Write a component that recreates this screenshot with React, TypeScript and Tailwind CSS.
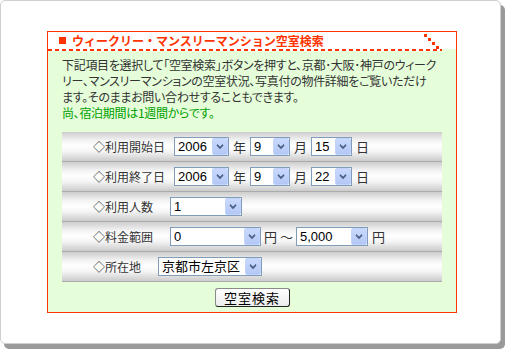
import React from "react";

const jp = "font-['Noto_Sans_CJK_JP','Noto_Sans',sans-serif]";

function Chevron() {
  return (
    <svg width="8" height="6" viewBox="0 0 8 6">
      <path d="M1 1 L4 4 L7 1" fill="none" stroke="#4d6185" strokeWidth="1.6" />
      <path d="M1 0 L4 3 L7 0" fill="none" stroke="#4d6185" strokeWidth="1" opacity="0.6" />
    </svg>
  );
}

function Select({ value, w }: { value: string; w: string }) {
  return (
    <div
      className={`${w} h-[19px] border border-[#7f9db9] bg-white flex items-stretch`}
    >
      <span className="flex-1 pl-[3px] text-[13px] leading-[17px] text-black font-['Liberation_Sans','Noto_Sans_CJK_JP',sans-serif] whitespace-nowrap overflow-hidden">
        {value}
      </span>
      <span className="w-[16px] flex items-center justify-center bg-gradient-to-b from-[#c9d9fc] to-[#b2c8f5] border border-[#c3d3fd] rounded-[2px]">
        <Chevron />
      </span>
    </div>
  );
}

function Unit({ t, cls = "mx-[4px]" }: { t: string; cls?: string }) {
  return <span className={`${cls} text-[13px] leading-[17px] text-[#333]`}>{t}</span>;
}

function Row({
  label,
  lw,
  children,
}: {
  label: string;
  lw: string;
  children: React.ReactNode;
}) {
  return (
    <div className="h-[30px] border-b border-[#ababab] bg-[linear-gradient(to_bottom,#cdcdcd_0%,#f2f2f2_28%,#ffffff_48%,#f4f4f4_68%,#cbcbcb_100%)] flex items-center">
      <span className={`${lw} pl-[31px] text-[12px] text-[#333] whitespace-nowrap`}>{label}</span>
      <div className="flex items-center">{children}</div>
    </div>
  );
}

export default function App() {
  return (
    <div className={`w-[505px] h-[349px] bg-white ${jp}`}>
      <div className="w-[501px] h-[344px] bg-white border border-[#cfcfcf] rounded-[5px] shadow-[4px_5px_0_#9a9a9a] pt-[30px] pl-[46px]">
        <div className="w-[410px] h-[282px] border border-[#ff3300] bg-[#e5fdd9] flex flex-col">
          {/* title */}
          <div className="relative h-[17px] bg-white flex items-center pl-[11px]">
            <span className="w-[7px] h-[7px] bg-[#ff3300] mr-[6px]" />
            <span className="text-[12px] font-bold text-[#ff3300] leading-[17px] whitespace-nowrap">
              ウィークリー・マンスリーマンション空室検索
            </span>
            <svg className="absolute left-[376px] top-[2px]" width="16" height="16" viewBox="0 0 16 16">
              <rect x="0" y="0" width="3" height="3" fill="#ff3300" />
              <rect x="4" y="4" width="3" height="3" fill="#ff3300" />
              <rect x="8" y="8" width="3" height="3" fill="#ff3300" />
              <rect x="12" y="12" width="3" height="3" fill="#ff3300" />
            </svg>
          </div>
          <div className="h-[2px] w-[394px] bg-[repeating-linear-gradient(to_right,#ff3300_0px,#ff3300_4px,#ffffff_4px,#ffffff_7px)]" />
          {/* body */}
          <div className="pl-[14px] pt-[6px]">
            <p className="text-[12px] leading-[16px] text-[#333] tracking-[-0.3px] [font-feature-settings:'palt'] whitespace-nowrap">
              下記項目を選択して「空室検索」ボタンを押すと、京都･大阪･神戸のウィーク
              <br />
              リー、マンスリーマンションの空室状況、写真付の物件詳細をご覧いただけ
              <br />
              ます。そのままお問い合わせすることもできます。
              <br />
              <span className="text-[#00a000]">尚、宿泊期間は1週間からです。</span>
            </p>
            <div className="mt-[11px] w-[380px] flex flex-col">
              <Row label="◇利用開始日" lw="w-[112px]">
                <Select value="2006" w="w-[55px]" />
                <Unit t="年" />
                <Select value="9" w="w-[40px]" />
                <Unit t="月" />
                <Select value="15" w="w-[41px]" />
                <Unit t="日" />
              </Row>
              <Row label="◇利用終了日" lw="w-[112px]">
                <Select value="2006" w="w-[55px]" />
                <Unit t="年" />
                <Select value="9" w="w-[40px]" />
                <Unit t="月" />
                <Select value="22" w="w-[41px]" />
                <Unit t="日" />
              </Row>
              <Row label="◇利用人数" lw="w-[108px]">
                <Select value="1" w="w-[72px]" />
              </Row>
              <Row label="◇料金範囲" lw="w-[108px]">
                <Select value="0" w="w-[91px]" />
                <Unit t="円" cls="ml-[3px]" />
                <Unit t="～" cls="mx-[3px]" />
                <Select value="5,000" w="w-[72px]" />
                <Unit t="円" cls="ml-[4px]" />
              </Row>
              <Row label="◇所在地" lw="w-[96px]">
                <Select value="京都市左京区" w="w-[104px]" />
              </Row>
              <div className="flex justify-center mt-[6px]">
                <button className="w-[75px] h-[19px] bg-[linear-gradient(to_bottom,#ffffff,#ececec)] border border-[#8a8a8a] border-b-[#222] border-r-[#222] rounded-[3px] text-[13px] leading-[15px] text-black tracking-[1px]">
                  空室検索
                </button>
              </div>
            </div>
          </div>
        </div>
      </div>
    </div>
  );
}
